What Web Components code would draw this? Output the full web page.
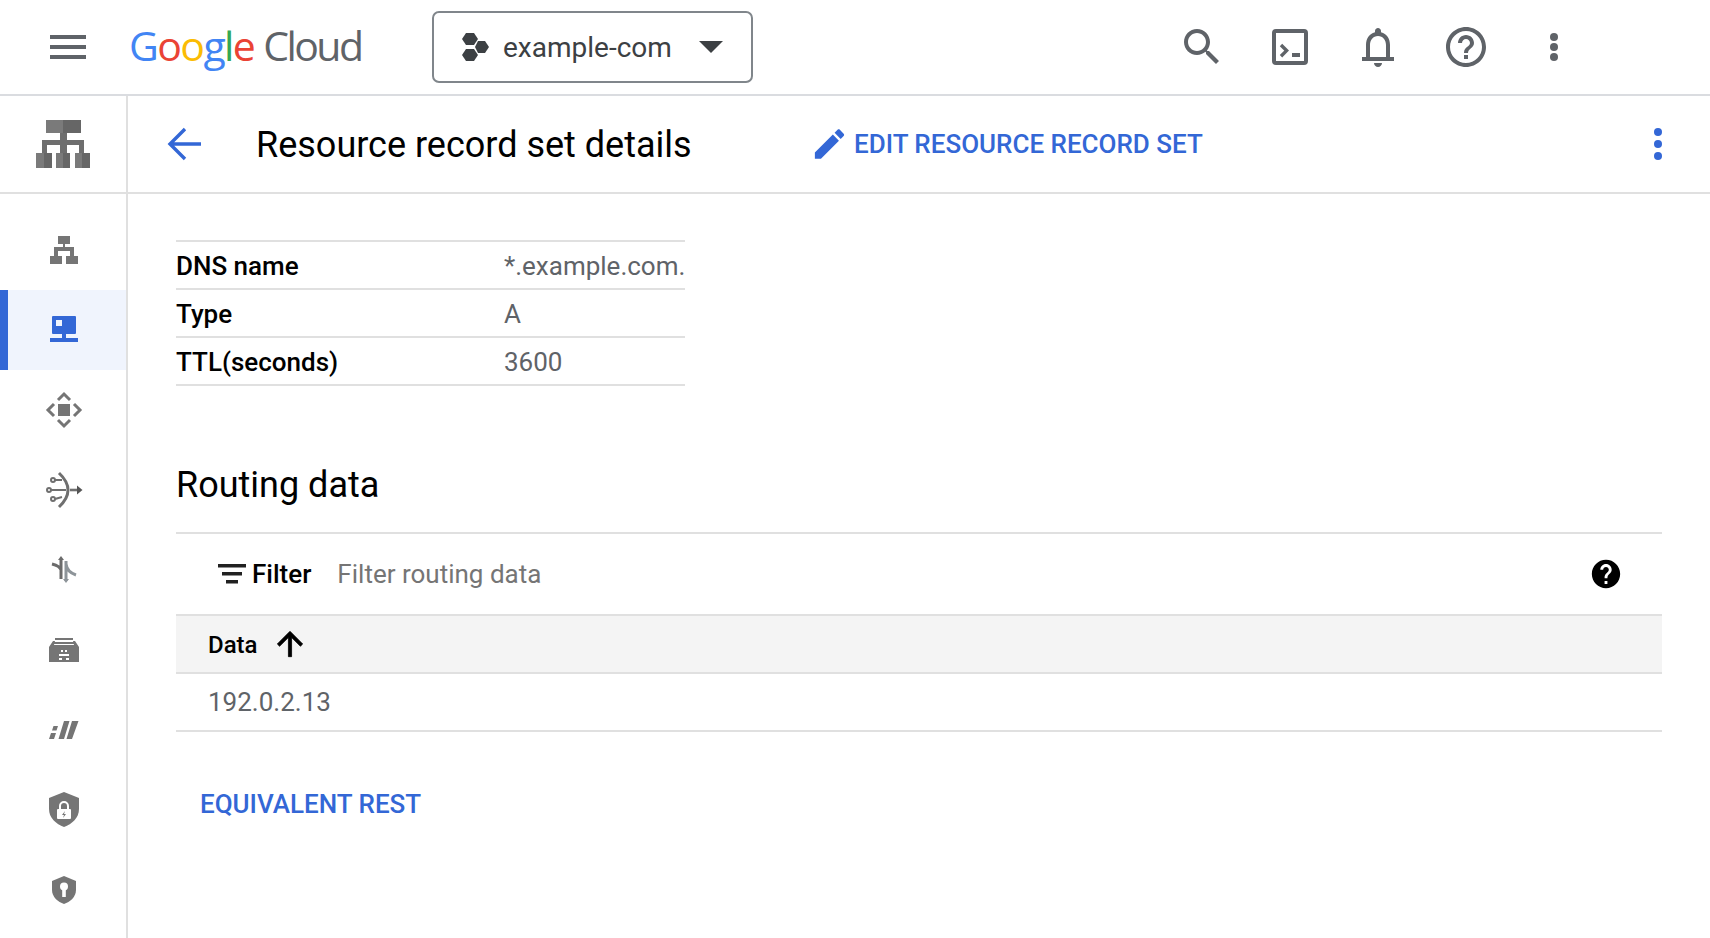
<!DOCTYPE html>
<html>
<head>
<meta charset="utf-8">
<title>Resource record set details</title>
<style>
  html,body{margin:0;padding:0;background:#fff;}
  body{width:1710px;height:938px;overflow:hidden;font-family:Roboto,"Liberation Sans",sans-serif;}
  .rows{display:flex;height:842px;}
</style>
</head>
<body>
<gc-topbar></gc-topbar>
<div class="rows">
  <gc-sidebar>
    <gc-nav-item><svg viewBox="0 0 40 40" width="40" height="40" fill="#757575"><rect x="14" y="6" width="12" height="8"/><rect x="19" y="14" width="2" height="5"/><path d="M12 27v-8h16v8" fill="none" stroke="#757575" stroke-width="4"/><rect x="6" y="26" width="12" height="8"/><rect x="22" y="26" width="12" height="8"/></svg></gc-nav-item>
    <gc-nav-item active><svg viewBox="0 0 40 40" width="40" height="40" fill="#3367d6"><path fill-rule="evenodd" d="M9 6h22a1 1 0 0 1 1 1v16a1 1 0 0 1-1 1H9a1 1 0 0 1-1-1V7a1 1 0 0 1 1-1zm3 4v6h6v-6z"/><rect x="18" y="24" width="4" height="4"/><rect x="6" y="28" width="28" height="4"/></svg></gc-nav-item>
    <gc-nav-item><svg viewBox="0 0 40 40" width="40" height="40" fill="none" stroke="#757575" stroke-width="3"><rect x="14" y="14" width="12" height="12" fill="#757575" stroke="none"/><path d="M14 10l6-6 6 6M14 30l6 6 6-6M10 14l-6 6 6 6M30 14l6 6-6 6"/></svg></gc-nav-item>
    <gc-nav-item><svg viewBox="0 0 40 40" width="40" height="40" fill="none" stroke="#6f6f6f" stroke-width="2"><path d="M15 3Q33 20 15 37" stroke-width="3"/><circle cx="9" cy="10" r="2"/><circle cx="5" cy="20" r="2"/><circle cx="9" cy="29" r="2"/><path d="M11 10h7M7 20h15M11 29l7-2"/><path d="M26 20h8" stroke-width="2.6"/><path d="M33 15.5l5.5 4.5-5.500 4.500z" fill="#555" stroke="none"/></svg></gc-nav-item>
    <gc-nav-item><svg viewBox="0 0 40 40" width="40" height="40" fill="none" stroke-width="3"><path d="M17 9v20M17 20Q16 16 8 14" stroke="#6b6b6b"/><path d="M14 10l3-4 3 4" fill="#6b6b6b"/><path d="M22 11v20M22 14Q23 22 32 25" stroke="#8d9499"/><path d="M19 29l3 4 3-4" fill="#8d9499"/></svg></gc-nav-item>
    <gc-nav-item><svg viewBox="0 0 40 40" width="40" height="40" fill="#757575"><rect x="11" y="8" width="18" height="2"/><path d="M5 17l4-6h2l-1 4h20l-1-4h2l4 6v15H5z"/><rect x="10" y="12" width="20" height="2"/><g fill="#fff"><rect x="17" y="20" width="2" height="2"/><rect x="21" y="20" width="2" height="2"/><rect x="15" y="24" width="10" height="2"/><rect x="15" y="28" width="3" height="2"/><rect x="22" y="28" width="3" height="2"/></g></svg></gc-nav-item>
    <gc-nav-item><svg viewBox="0 0 40 40" width="40" height="40" fill="#757575"><path d="M28 11h6.500l-6.500 18h-5.500zM20 11h5.500l-5.500 18h-5.500zM9.500 16H14l-1.500 4.500H8zM7 23h5l-2 6H5z"/></svg></gc-nav-item>
    <gc-nav-item><svg viewBox="0 0 40 40" width="40" height="40" fill="#757575"><path d="M20 2l15 6v11c0 9-7 15-15 18C12 34 5 28 5 19V8z"/><rect x="13" y="19" width="14" height="10" rx="1" fill="#fff"/><path d="M16 19v-3a4 4 0 0 1 8 0v3" fill="none" stroke="#fff" stroke-width="2"/><path d="M21 21l-3 4h2l-1 3 3-4h-2z"/></svg></gc-nav-item>
    <gc-nav-item><svg viewBox="0 0 40 40" width="40" height="40" fill="#757575"><path d="M20 6l12 5v9c0 7-6 12-12 14C14 32 8 27 8 20v-9z"/><circle cx="20" cy="16.5" r="4" fill="#fff"/><rect x="18.2" y="17" width="3.6" height="10" fill="#fff"/></svg></gc-nav-item>
  </gc-sidebar>
  <gc-content>
    <gc-page-header slot="header" title-text="Resource record set details" action="EDIT RESOURCE RECORD SET"></gc-page-header>
    <gc-details>
      <gc-detail-row label="DNS name" value="*.example.com."></gc-detail-row>
      <gc-detail-row label="Type" value="A"></gc-detail-row>
      <gc-detail-row label="TTL(seconds)" value="3600"></gc-detail-row>
    </gc-details>
    <gc-routing-table heading="Routing data" placeholder="Filter routing data" column="Data" cell="192.0.2.13"></gc-routing-table>
    <gc-link-button>EQUIVALENT REST</gc-link-button>
  </gc-content>
</div>

<script>
const paths = {
  menu: 'M3 18h18v-2H3v2zm0-5h18v-2H3v2zm0-7v2h18V6H3z',
  search: 'M15.5 14h-.79l-.28-.27C15.41 12.59 16 11.11 16 9.5 16 5.91 13.09 3 9.5 3S3 5.91 3 9.5 5.91 16 9.5 16c1.61 0 3.09-.59 4.23-1.57l.27.28v.79l5 4.99L20.49 19l-4.99-5zm-6 0C7.01 14 5 11.99 5 9.5S7.01 5 9.5 5 14 7.01 14 9.5 11.99 14 9.5 14z',
  help: 'M11 18h2v-2h-2v2zm1-16C6.48 2 2 6.48 2 12s4.48 10 10 10 10-4.48 10-10S17.52 2 12 2zm0 18c-4.41 0-8-3.59-8-8s3.59-8 8-8 8 3.59 8 8-3.59 8-8 8zm0-14c-2.21 0-4 1.79-4 4h2c0-1.1.9-2 2-2s2 .9 2 2c0 2-3 1.75-3 5h2c0-2.25 3-2.5 3-5 0-2.21-1.79-4-4-4z',
  helpFilled: 'M12 2C6.48 2 2 6.48 2 12s4.48 10 10 10 10-4.48 10-10S17.52 2 12 2zm1 17h-2v-2h2v2zm2.07-7.75l-.9.92C13.45 12.9 13 13.5 13 15h-2v-.5c0-1.1.45-2.1 1.17-2.83l1.24-1.26c.37-.36.59-.86.59-1.41 0-1.1-.9-2-2-2s-2 .9-2 2H8c0-2.21 1.79-4 4-4s4 1.79 4 4c0 .88-.36 1.68-.93 2.25z',
  edit: 'M3 17.25V21h3.75L17.81 9.94l-3.75-3.75L3 17.25zM20.71 7.04c.39-.39.39-1.02 0-1.41l-2.34-2.34c-.39-.39-1.02-.39-1.41 0l-1.83 1.83 3.75 3.75 1.83-1.83z',
  up: 'M4 12l1.41 1.41L11 7.83V20h2V7.83l5.58 5.59L20 12l-8-8-8 8z'
}

customElements.define('gc-topbar', class extends HTMLElement {
  constructor() {
    super()
    this.attachShadow({ mode: 'open' }).innerHTML = `
    <style>
      :host{display:flex;align-items:center;height:96px;box-sizing:border-box;border-bottom:2px solid #dadce0;padding-left:44px;background:#fff;position:relative;}
      svg{display:block;flex:none;}
      .logo{margin:-4px 0 0 37px;width:252px;font:400 41px/48px "Open Sans","Noto Sans",sans-serif;letter-spacing:-1.6px;white-space:nowrap;color:#5f6368;}
      .logo b{font-weight:400;}
      .logo i{font-style:normal;letter-spacing:-2.6px;}
      .project{margin-left:51px;width:321px;height:72px;box-sizing:border-box;border:2px solid #80868b;border-radius:7px;display:flex;align-items:center;padding-left:28px;color:#3c4043;font:400 28px Roboto,sans-serif;}
      .project span{margin-left:14px;width:196px;}
      .icons{display:flex;align-items:center;margin-left:425px;gap:40px;}
    </style>
    <svg width="48" height="48" viewBox="0 0 24 24" fill="#5f6368"><path d="${paths.menu}"/></svg>
    <div class="logo"><b style="color:#4285f4">G</b><b style="color:#ea4335">o</b><b style="color:#fbbc04">o</b><b style="color:#4285f4">g</b><b style="color:#34a853">l</b><b style="color:#ea4335">e</b> <i>Cloud</i></div>
    <div class="project">
      <svg width="27" height="28" viewBox="0 0 27 28" fill="#3c4043"><path d="M0 6L4 0h8l4 6-4 6H4z"/><path d="M0 22l4-6h8l4 6-4 6H4z"/><path d="M13 14l3-6h7l4 6-4 6h-7z"/></svg>
      <span>example-com</span>
      <svg width="24" height="12" viewBox="0 0 24 12" fill="#3c4043"><path d="M0 0h24L12 12z"/></svg>
    </div>
    <div class="icons" style="fill:#5f6368">
      <svg width="48" height="48" viewBox="0 0 24 24"><path d="${paths.search}"/></svg>
      <svg width="48" height="48" viewBox="0 0 24 24"><path fill-rule="evenodd" d="M5 3h14a2 2 0 0 1 2 2v14a2 2 0 0 1-2 2H5a2 2 0 0 1-2-2V5a2 2 0 0 1 2-2zm0 2v14h14V5z"/><path d="M7.500 11l2.800 2.800-2.800 2.800" fill="none" stroke="#5f6368" stroke-width="1.700"/><rect x="13" y="15" width="4" height="2"/></svg>
      <svg width="48" height="48" viewBox="0 0 24 24"><path fill-rule="evenodd" d="M4 17h2v-6c0-3.070 1.640-5.640 4.500-6.320V4c0-.83.67-1.500 1.500-1.500s1.500.67 1.500 1.500v.68C16.370 5.360 18 7.930 18 11v6h2v2H4zm4 0h8v-6c0-2.480-1.510-4.500-4-4.500S8 8.520 8 11z"/><path d="M10 20h4c0 1.100-.9 2-2 2s-2-.9-2-2z"/></svg>
      <svg width="48" height="48" viewBox="0 0 24 24"><path d="${paths.help}"/></svg>
      <svg width="48" height="48" viewBox="0 0 48 48"><circle cx="24" cy="14" r="4"/><circle cx="24" cy="24" r="4"/><circle cx="24" cy="34" r="4"/></svg>
    </div>`
  }
})

customElements.define('gc-sidebar', class extends HTMLElement {
  constructor() {
    super()
    this.attachShadow({ mode: 'open' }).innerHTML = `
    <style>
      :host{display:block;flex:none;width:128px;box-sizing:border-box;border-right:2px solid #e0e0e0;}
      .brand{height:98px;box-sizing:border-box;border-bottom:2px solid #e0e0e0;margin-right:-2px;padding:24px 0 0 36px;}
      svg{display:block;}
      nav{padding-top:16px;}
    </style>
    <div class="brand">
      <svg width="54" height="48" viewBox="0 0 54 48">
        <rect x="10" width="17" height="13" fill="#7a7a7a"/><rect x="27" width="18" height="13" fill="#666"/>
        <rect x="24" y="13" width="7" height="7" fill="#6e6e6e"/>
        <rect x="6" y="20" width="42" height="5" fill="#6e6e6e"/>
        <rect x="6" y="25" width="5" height="8" fill="#6e6e6e"/><rect x="24" y="25" width="7" height="8" fill="#6e6e6e"/><rect x="43" y="25" width="5" height="8" fill="#6e6e6e"/>
        <rect y="33" width="8" height="15" fill="#7a7a7a"/><rect x="8" y="33" width="8" height="15" fill="#666"/>
        <rect x="20" y="33" width="7" height="15" fill="#7a7a7a"/><rect x="27" y="33" width="7" height="15" fill="#666"/>
        <rect x="39" y="33" width="7" height="15" fill="#7a7a7a"/><rect x="46" y="33" width="8" height="15" fill="#666"/>
      </svg>
    </div>
    <nav><slot></slot></nav>`
  }
})

customElements.define('gc-nav-item', class extends HTMLElement {
  constructor() {
    super()
    this.attachShadow({ mode: 'open' }).innerHTML = `
    <style>
      :host{display:flex;align-items:center;justify-content:center;height:80px;padding-left:2px;box-sizing:border-box;}
      :host([active]){background:#f0f4fd;border-left:8px solid #3367d6;padding-left:0;padding-right:6px;}
    </style>
    <slot></slot>`
  }
})

customElements.define('gc-content', class extends HTMLElement {
  constructor() {
    super()
    this.attachShadow({ mode: 'open' }).innerHTML = `
    <style>
      :host{display:flex;flex-direction:column;flex:1;min-width:0;}
      .body{padding:46px 48px 0;}
    </style>
    <slot name="header"></slot>
    <div class="body"><slot></slot></div>`
  }
})

customElements.define('gc-page-header', class extends HTMLElement {
  constructor() {
    super()
    this.attachShadow({ mode: 'open' }).innerHTML = `
    <style>
      :host{display:flex;align-items:center;height:98px;box-sizing:border-box;border-bottom:2px solid #e0e0e0;padding-left:32px;}
      svg{display:block;flex:none;}
      h1{margin:2px 0 0 48px;width:553px;font:400 36px/48px Roboto,sans-serif;color:#000;white-space:nowrap;}
      .action{display:flex;align-items:center;color:#3367d6;font:500 26px Roboto,sans-serif;flex:1;white-space:nowrap;}
      .action svg{margin:0 5px 0 1px;}
      .more{margin-right:28px;}
    </style>
    <svg width="48" height="48" viewBox="0 0 48 48" fill="none" stroke="#3367d6" stroke-width="3.400"><path d="M41 24H11M25 9L10 24l15 15"/></svg>
    <h1>${this.getAttribute('title-text')}</h1>
    <div class="action">
      <svg width="39" height="40" viewBox="0 0 24 24" fill="#3367d6"><path d="${paths.edit}"/></svg>
      <span>${this.getAttribute('action')}</span>
    </div>
    <svg class="more" width="48" height="48" viewBox="0 0 48 48" fill="#3367d6"><circle cx="24" cy="12" r="4"/><circle cx="24" cy="24" r="4"/><circle cx="24" cy="36" r="4"/></svg>`
  }
})

customElements.define('gc-details', class extends HTMLElement {
  constructor() {
    super()
    this.attachShadow({ mode: 'open' }).innerHTML = `
    <style>
      :host{display:block;width:509px;border-bottom:2px solid #e0e0e0;}
    </style>
    <slot></slot>`
  }
})

customElements.define('gc-detail-row', class extends HTMLElement {
  constructor() {
    super()
    this.attachShadow({ mode: 'open' }).innerHTML = `
    <style>
      :host{display:grid;grid-template-columns:328px 1fr;align-items:center;height:48px;padding-top:2px;box-sizing:border-box;border-top:2px solid #e0e0e0;font:400 26px Roboto,sans-serif;white-space:nowrap;}
      .l{font-weight:500;color:#000;}
      .v{color:#5f6368;}
    </style>
    <div class="l">${this.getAttribute('label')}</div>
    <div class="v">${this.getAttribute('value')}</div>`
  }
})

customElements.define('gc-routing-table', class extends HTMLElement {
  constructor() {
    super()
    this.attachShadow({ mode: 'open' }).innerHTML = `
    <style>
      :host{display:block;}
      h2{margin:70px 0 18px;font:400 36px/58px Roboto,sans-serif;color:#000;}
      svg{display:block;flex:none;}
      .filter{display:flex;align-items:center;height:84px;box-sizing:border-box;border-top:2px solid #e0e0e0;border-bottom:2px solid #e0e0e0;padding-left:42px;font:400 26px Roboto,sans-serif;}
      .filter b{font-weight:500;color:#000;margin-left:6px;}
      .filter .ph{color:#757575;margin-left:26px;flex:1;}
      .filter .q{margin-right:39px;}
      .head{display:flex;align-items:center;height:58px;box-sizing:border-box;background:#f4f4f4;border-bottom:2px solid #e0e0e0;padding:2px 0 0 32px;font:500 24px Roboto,sans-serif;color:#000;}
      .head svg{margin:-3px 0 0 13px;}
      .cell{display:flex;align-items:center;height:58px;box-sizing:border-box;border-bottom:2px solid #e0e0e0;padding-left:32px;font:400 26px Roboto,sans-serif;color:#5f6368;}
    </style>
    <h2>${this.getAttribute('heading')}</h2>
    <div class="filter">
      <svg width="28" height="20" viewBox="0 0 28 20" fill="#212121"><rect width="28" height="3.500"/><rect x="4" y="8" width="20" height="3.500"/><rect x="8" y="16" width="12" height="3.500"/></svg>
      <b>Filter</b>
      <span class="ph">${this.getAttribute('placeholder')}</span>
      <svg class="q" width="34" height="34" viewBox="0 0 24 24" fill="#000"><path d="${paths.helpFilled}"/></svg>
    </div>
    <div class="head">
      <span>${this.getAttribute('column')}</span>
      <svg width="38" height="38" viewBox="0 0 24 24" fill="#000" stroke="#000" stroke-width=".5"><path d="${paths.up}"/></svg>
    </div>
    <div class="cell">${this.getAttribute('cell')}</div>`
  }
})

customElements.define('gc-link-button', class extends HTMLElement {
  constructor() {
    super()
    this.attachShadow({ mode: 'open' }).innerHTML = `
    <style>
      :host{display:block;margin:56px 0 0 24px;font:500 26px/32px Roboto,sans-serif;color:#3367d6;white-space:nowrap;}
    </style>
    <slot></slot>`
  }
})
</script>
</body>
</html>
